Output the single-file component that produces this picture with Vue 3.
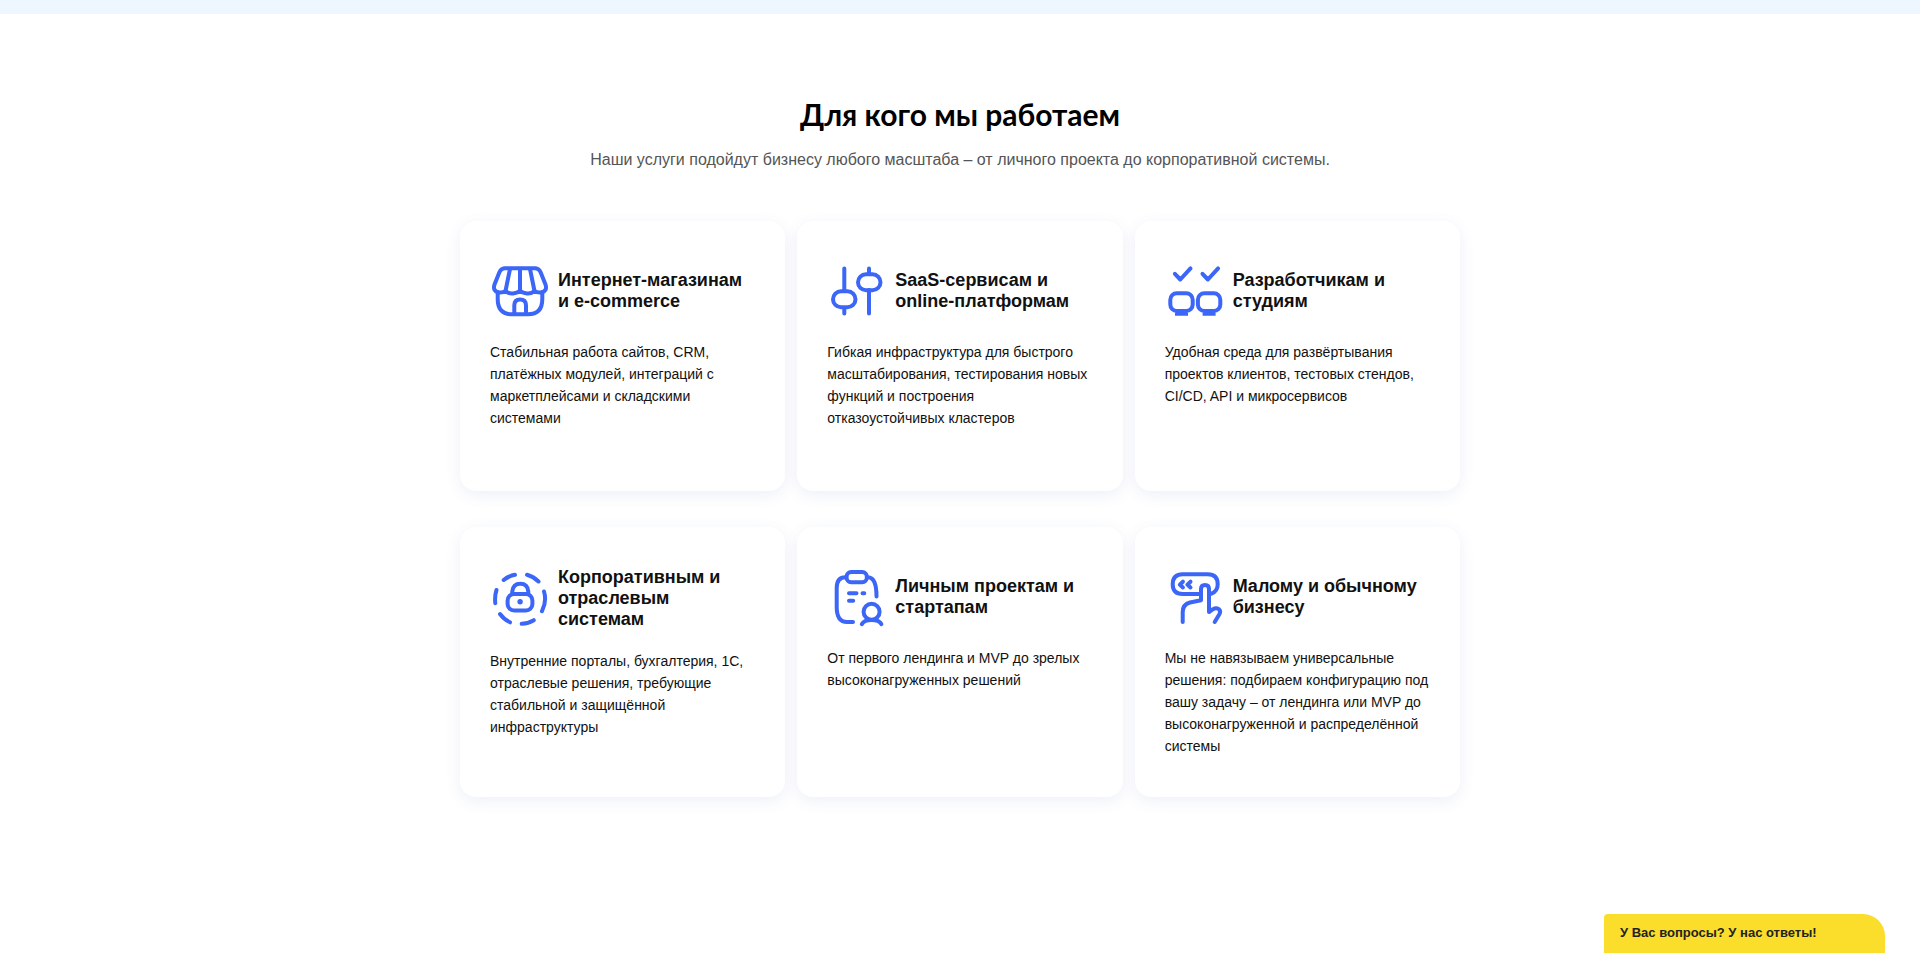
<script setup>
const cards = [
  {
    icon: 'shop',
    title: 'Интернет‑магазинам и e‑commerce',
    text: 'Стабильная работа сайтов, CRM, платёжных модулей, интеграций с маркетплейсами и складскими системами',
  },
  {
    icon: 'sliders',
    title: 'SaaS‑сервисам и online‑платформам',
    text: 'Гибкая инфраструктура для быстрого масштабирования, тестирования новых функций и построения отказоустойчивых кластеров',
  },
  {
    icon: 'screens',
    title: 'Разработчикам и студиям',
    text: 'Удобная среда для развёртывания проектов клиентов, тестовых стендов, CI/CD, API и микросервисов',
  },
  {
    icon: 'lock',
    title: 'Корпоративным и отраслевым системам',
    text: 'Внутренние порталы, бухгалтерия, 1С, отраслевые решения, требующие стабильной и защищённой инфраструктуры',
  },
  {
    icon: 'profile',
    title: 'Личным проектам и стартапам',
    text: 'От первого лендинга и MVP до зрелых высоконагруженных решений',
  },
  {
    icon: 'touch',
    title: 'Малому и обычному бизнесу',
    text: 'Мы не навязываем универсальные решения: подбираем конфигурацию под вашу задачу – от лендинга или MVP до высоконагруженной и распределённой системы',
  },
]
</script>

<template>
  <div class="page">
    <div class="band"></div>
    <main class="audience">
      <h2 class="heading">Для кого мы работаем</h2>
      <p class="lead">Наши услуги подойдут бизнесу любого масштаба – от личного проекта до корпоративной системы.</p>
      <div class="grid">
        <article v-for="card in cards" :key="card.icon" class="card">
          <header class="card-head">
            <svg class="icon" viewBox="0 0 60 60" aria-hidden="true">
              <g v-if="card.icon === 'shop'">
                <path d="M14.500 7.200H45.500Q49 7.500 50.500 11L55.500 23.500Q57.500 30 51.500 31.500Q47 32 44.500 30Q41 33 37 32.500Q33 32 30 30Q27 32 23 32.500Q19 33 15.500 30Q13 32 8.500 31.500Q2.500 30 4.500 23.500L9.500 11Q11 7.500 14.500 7.200Z" />
                <path d="M20 8L15.500 30M30 8V30M40 8L44.500 30" />
                <path d="M7.700 31V38Q7.700 53.300 22 53.300H38Q52.300 53.300 52.300 38V31" />
                <path d="M24.300 52V44.500Q24.300 38.500 30.100 38.500Q36 38.500 36 44.500V52" />
              </g>
              <g v-else-if="card.icon === 'sliders'">
                <path d="M17.300 7.500V30M17.300 47V52.500M42 7.500V13M42 29V52.500" />
                <rect x="6" y="30.300" width="22.500" height="16" rx="8" />
                <rect x="31" y="13.200" width="22.500" height="16" rx="8" />
              </g>
              <g v-else-if="card.icon === 'screens'">
                <path d="M9.900 12.800L15.300 18.500L25.500 7.400M37.500 12.800L42.900 18.500L53.100 7.400" />
                <rect x="5.300" y="32.300" width="22.400" height="17.800" rx="6.500" />
                <rect x="32.900" y="32.300" width="22.400" height="17.800" rx="6.500" />
                <path class="solid" d="M12.500 49H21L22 51.500H23V54.800H10V51.500H11.500ZM40.100 49H48.600L49.600 51.500H50.600V54.800H37.600V51.500H39.100Z" />
              </g>
              <g v-else-if="card.icon === 'lock'">
                <path d="M13.700 11Q18.500 7 25 5.800M37 5.800Q43.500 7.500 48.500 12.500M54 22.500Q57 32 52 42.200M43.800 51.200Q38.500 54.500 31.700 54.800M20 53.300Q14 50.500 10 45M5.300 34.200Q4.500 27 6.500 21" />
                <path d="M22.300 25V22.500Q23 14.700 30.300 14.700Q37.700 14.700 38.300 22.500V25" />
                <rect x="17.600" y="25" width="24.800" height="16.500" rx="6.500" />
                <circle class="solid" cx="30.100" cy="32.700" r="2.700" />
              </g>
              <g v-else-if="card.icon === 'profile'">
                <rect x="19.600" y="5" width="20.200" height="10.200" rx="4.500" />
                <path d="M18.500 10.300Q9.700 10.300 9.700 21V40Q9.700 55 20 55H26M41 10.300Q49.500 10.500 49.500 29.500" />
                <path d="M22 26.300H29.500M35.500 26.300H37.300M22 33.700H26.200" />
                <circle cx="44.600" cy="44.700" r="8" />
                <path d="M34.800 57.200Q37 53 44.600 53Q52.400 53 54.400 57.200" />
              </g>
              <g v-else>
                <path d="M35 27H17.700Q7.700 27 7.700 17.200Q7.700 7.200 17.700 7.200H42.700Q52.700 7.200 52.700 17.200Q52.700 24.500 46 26.800" />
                <path d="M17.900 14.700L14.800 17.600L17.900 20.500M25.500 14.700L22.400 17.600L25.500 20.500" />
                <path d="M17.700 55V45Q17.700 37.500 25 35.500L36 33.200V22Q36 18 40 18Q44 18 44 22V45L48 42.200Q51 40.500 54 42.200Q56 44 54.500 47L49.700 55" />
              </g>
            </svg>
            <h3 class="title">{{ card.title }}</h3>
          </header>
          <p class="text">{{ card.text }}</p>
        </article>
      </div>
    </main>
    <button class="chat" type="button">У Вас вопросы? У нас ответы!</button>
  </div>
</template>

<style>
body {
  margin: 0;
  background: #fff;
}
</style>

<style scoped>
.page {
  font-family: "Liberation Sans", Arial, sans-serif;
  color: #111;
}
.band {
  height: 14px;
  background: #eef6ff;
}
.audience {
  max-width: 1000px;
  margin: 0 auto;
  padding: 80px 0;
}
.heading {
  margin: 0;
  font: 700 30px/40px Lato, sans-serif;
  color: #000;
  text-align: center;
}
.lead {
  margin: 14px 0 49px;
  font-size: 16px;
  line-height: 24px;
  color: #555;
  text-align: center;
}
.grid {
  display: grid;
  grid-template-columns: repeat(3, 1fr);
  grid-auto-rows: 1fr;
  gap: 36px 12px;
}
.card {
  padding: 40px 30px;
  border-radius: 16px;
  background: #fff;
  box-shadow: 0 4px 16px rgba(70, 90, 180, 0.09);
}
.card-head {
  display: flex;
  align-items: center;
  gap: 8px;
  margin-bottom: 20px;
}
.icon {
  flex: none;
  width: 60px;
  height: 60px;
  fill: none;
  stroke: #3b66f7;
  stroke-width: 4;
  stroke-linecap: round;
  stroke-linejoin: round;
}
.solid {
  fill: #3b66f7;
  stroke: none;
}
.title {
  margin: 0;
  font-size: 18px;
  line-height: normal;
  font-weight: 700;
}
.text {
  margin: 0;
  font-size: 14px;
  line-height: 22px;
}
.chat {
  position: fixed;
  right: 35px;
  bottom: 0;
  width: 281px;
  height: 39px;
  padding: 0 16px 1px;
  border: 0;
  border-radius: 4px 22px 0 0;
  background: #fbde2b;
  color: #222;
  font: 700 13px/20px "Liberation Sans", Arial, sans-serif;
  text-align: left;
  cursor: pointer;
}
</style>
